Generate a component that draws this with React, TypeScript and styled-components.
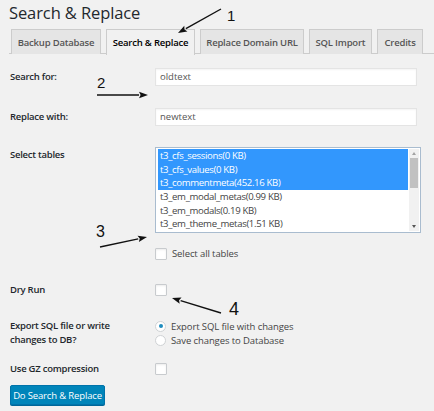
import React from "react";
import styled, { createGlobalStyle, css } from "styled-components";

const Global = createGlobalStyle`
  html, body { margin: 0; padding: 0; background: #f1f1f1; }
  body { font-family: "Open Sans", "Noto Sans", sans-serif; color: #23282d; }
  * { box-sizing: border-box; }
`;

const Page = styled.div`
  position: relative;
  width: 434px;
  height: 411px;
  overflow: hidden;
  padding: 0 0 0 9px;
`;

const Title = styled.h1`
  margin: 0;
  padding-top: 2px;
  font-size: 16.5px;
  font-weight: 400;
  line-height: 22px;
  color: #23282d;
  letter-spacing: -0.1px;
`;

const TabBar = styled.div`
  display: flex;
  gap: 5px;
  margin-top: 5px;
  padding-left: 2px;
  border-bottom: 1px solid #ccc;
  height: 25px;
`;

const Tab = styled.div<{ $active?: boolean; $w: number }>`
  width: ${(p) => p.$w}px;
  height: 25px;
  display: flex;
  align-items: center;
  justify-content: center;
  border: 1px solid #ccc;
  border-bottom: none;
  background: #e5e5e5;
  color: #555;
  font-size: 9.5px;
  font-weight: 600;
  letter-spacing: -0.2px;
  white-space: nowrap;
  ${(p) =>
    p.$active &&
    css`
      background: #f1f1f1;
      color: #000;
      height: 26px;
    `}
`;

const Form = styled.div`
  padding-left: 1px;
`;

const Row = styled.div<{ $top: number; $align?: string }>`
  display: grid;
  grid-template-columns: 145px 1fr;
  align-items: ${(p) => p.$align || "center"};
  margin-top: ${(p) => p.$top}px;
`;

const Label = styled.div<{ $padTop?: number }>`
  font-size: 9.5px;
  font-weight: 600;
  line-height: 14px;
  color: #23282d;
  letter-spacing: -0.25px;
  padding-top: ${(p) => p.$padTop || 0}px;
`;

const TextInput = styled.div`
  width: 262px;
  height: 18px;
  background: #fff;
  border: 1px solid #e4e4e4;
  box-shadow: inset 0 1px 2px rgba(0, 0, 0, 0.05);
  font-size: 9.5px;
  line-height: 16px;
  padding-left: 4px;
  color: #555;
`;

const SelectBox = styled.div`
  width: 266px;
  height: 86px;
  background: #fff;
  border: 1px solid #a9bccf;
  display: flex;
  padding: 1px 1px 1px 2px;
`;

const OptionList = styled.div`
  flex: 1;
  display: flex;
  flex-direction: column;
`;

const Option = styled.div<{ $selected?: boolean }>`
  height: 13.6px;
  line-height: 13.6px;
  font-size: 9.6px;
  padding-left: 2px;
  letter-spacing: -0.35px;
  color: ${(p) => (p.$selected ? "#fff" : "#444")};
  background: ${(p) => (p.$selected ? "#3297fd" : "transparent")};
`;

const Spacer = styled.div`
  height: 2.5px;
`;

const Scrollbar = styled.div`
  width: 10px;
  margin-left: 1px;
  background: #f1f1f1;
  display: flex;
  flex-direction: column;
  align-items: center;
`;

const ScrollArrow = styled.div<{ $down?: boolean }>`
  height: 9px;
  display: flex;
  align-items: center;
  justify-content: center;
  &::after {
    content: "";
    border-left: 2.5px solid transparent;
    border-right: 2.5px solid transparent;
    ${(p) =>
      p.$down
        ? "border-top: 3px solid #555;"
        : "border-bottom: 3px solid #a3a3a3;"}
  }
`;

const Thumb = styled.div`
  width: 8px;
  height: 30px;
  background: #c1c1c1;
`;

const Fill = styled.div`
  flex: 1;
`;

const CheckRow = styled.div`
  display: flex;
  align-items: center;
  gap: 5px;
  margin-top: 14px;
  font-size: 9.5px;
  color: #444;
  letter-spacing: -0.1px;
`;

const Checkbox = styled.div`
  width: 12px;
  height: 12px;
  background: #fff;
  border: 1px solid #c8cbce;
  border-radius: 1px;
  box-shadow: inset 0 1px 2px rgba(0, 0, 0, 0.08);
`;

const RadioGroup = styled.div`
  display: flex;
  flex-direction: column;
`;

const RadioItem = styled.div`
  display: flex;
  align-items: center;
  gap: 5px;
  height: 14px;
  font-size: 9.5px;
  color: #444;
  letter-spacing: -0.1px;
`;

const Radio = styled.div<{ $checked?: boolean }>`
  width: 11px;
  height: 11px;
  border-radius: 50%;
  background: #fff;
  border: 1px solid #cfd2d4;
  display: flex;
  align-items: center;
  justify-content: center;
  &::after {
    content: "";
    width: 4px;
    height: 4px;
    border-radius: 50%;
    background: ${(p) => (p.$checked ? "#1e8cbe" : "transparent")};
  }
`;

const Button = styled.div`
  margin-top: 9px;
  width: 95px;
  height: 20px;
  background: #0085ba;
  border: 1px solid #0073aa;
  border-radius: 2px;
  color: #fff;
  font-size: 9.5px;
  display: flex;
  align-items: center;
  justify-content: center;
  letter-spacing: -0.15px;
  box-shadow: 0 1px 0 #006799;
`;

const Overlay = styled.svg`
  position: absolute;
  left: 0;
  top: 0;
  pointer-events: none;
`;

const Num = styled.text`
  font-family: "Liberation Sans", Arial, sans-serif;
  fill: #111;
`;

type ArrowProps = { x1: number; y1: number; x2: number; y2: number };
const Arrow = ({ x1, y1, x2, y2 }: ArrowProps) => {
  const ang = Math.atan2(y2 - y1, x2 - x1);
  const L = 9;
  const W = 3.2;
  const bx = x2 - L * Math.cos(ang);
  const by = y2 - L * Math.sin(ang);
  const px = -Math.sin(ang) * W;
  const py = Math.cos(ang) * W;
  const nx = bx + 1.6 * Math.cos(ang);
  const ny = by + 1.6 * Math.sin(ang);
  return (
    <g>
      <line x1={x1} y1={y1} x2={bx} y2={by} stroke="#111" strokeWidth={1.4} />
      <polygon
        points={`${x2},${y2} ${bx + px},${by + py} ${nx},${ny} ${bx - px},${by - py}`}
        fill="#111"
      />
    </g>
  );
};

const selected = [
  "t3_cfs_sessions(0 KB)",
  "t3_cfs_values(0 KB)",
  "t3_commentmeta(452.16 KB)",
];
const others = [
  "t3_em_modal_metas(0.99 KB)",
  "t3_em_modals(0.19 KB)",
  "t3_em_theme_metas(1.51 KB)",
];

export default function App() {
  return (
    <Page>
      <Global />
      <Title>Search &amp; Replace</Title>
      <TabBar>
        <Tab $w={90}>Backup Database</Tab>
        <Tab $w={89} $active>
          Search &amp; Replace
        </Tab>
        <Tab $w={104}>Replace Domain URL</Tab>
        <Tab $w={63}>SQL Import</Tab>
        <Tab $w={46}>Credits</Tab>
      </TabBar>
      <Form>
        <Row $top={14}>
          <Label>Search for:</Label>
          <TextInput>oldtext</TextInput>
        </Row>
        <Row $top={22}>
          <Label>Replace with:</Label>
          <TextInput>newtext</TextInput>
        </Row>
        <Row $top={21} $align="start">
          <Label $padTop={1}>Select tables</Label>
          <div>
            <SelectBox>
              <OptionList>
                {selected.map((t) => (
                  <Option key={t} $selected>
                    {t}
                  </Option>
                ))}
                <Spacer />
                {others.map((t) => (
                  <Option key={t}>{t}</Option>
                ))}
              </OptionList>
              <Scrollbar>
                <ScrollArrow />
                <Thumb />
                <Fill />
                <ScrollArrow $down />
              </Scrollbar>
            </SelectBox>
            <CheckRow>
              <Checkbox />
              Select all tables
            </CheckRow>
          </div>
        </Row>
        <Row $top={23}>
          <Label>Dry Run</Label>
          <Checkbox />
        </Row>
        <Row $top={22} $align="start">
          <Label>
            Export SQL file or write
            <br />
            changes to DB?
          </Label>
          <RadioGroup>
            <RadioItem>
              <Radio $checked />
              Export SQL file with changes
            </RadioItem>
            <RadioItem>
              <Radio />
              Save changes to Database
            </RadioItem>
          </RadioGroup>
        </Row>
        <Row $top={15}>
          <Label>Use GZ compression</Label>
          <Checkbox />
        </Row>
        <Button>Do Search &amp; Replace</Button>
      </Form>
      <Overlay width={434} height={411}>
        <Arrow x1={221} y1={9} x2={178} y2={33} />
        <Num x={227} y={21} fontSize={15}>1</Num>
        <Arrow x1={97} y1={95} x2={148} y2={95} />
        <Num x={97} y={88} fontSize={15}>2</Num>
        <Arrow x1={100} y1={247} x2={147} y2={237} />
        <Num x={96} y={237} fontSize={16}>3</Num>
        <Arrow x1={221} y1={313} x2={172} y2={298} />
        <Num x={229} y={315} fontSize={18}>4</Num>
      </Overlay>
    </Page>
  );
}
